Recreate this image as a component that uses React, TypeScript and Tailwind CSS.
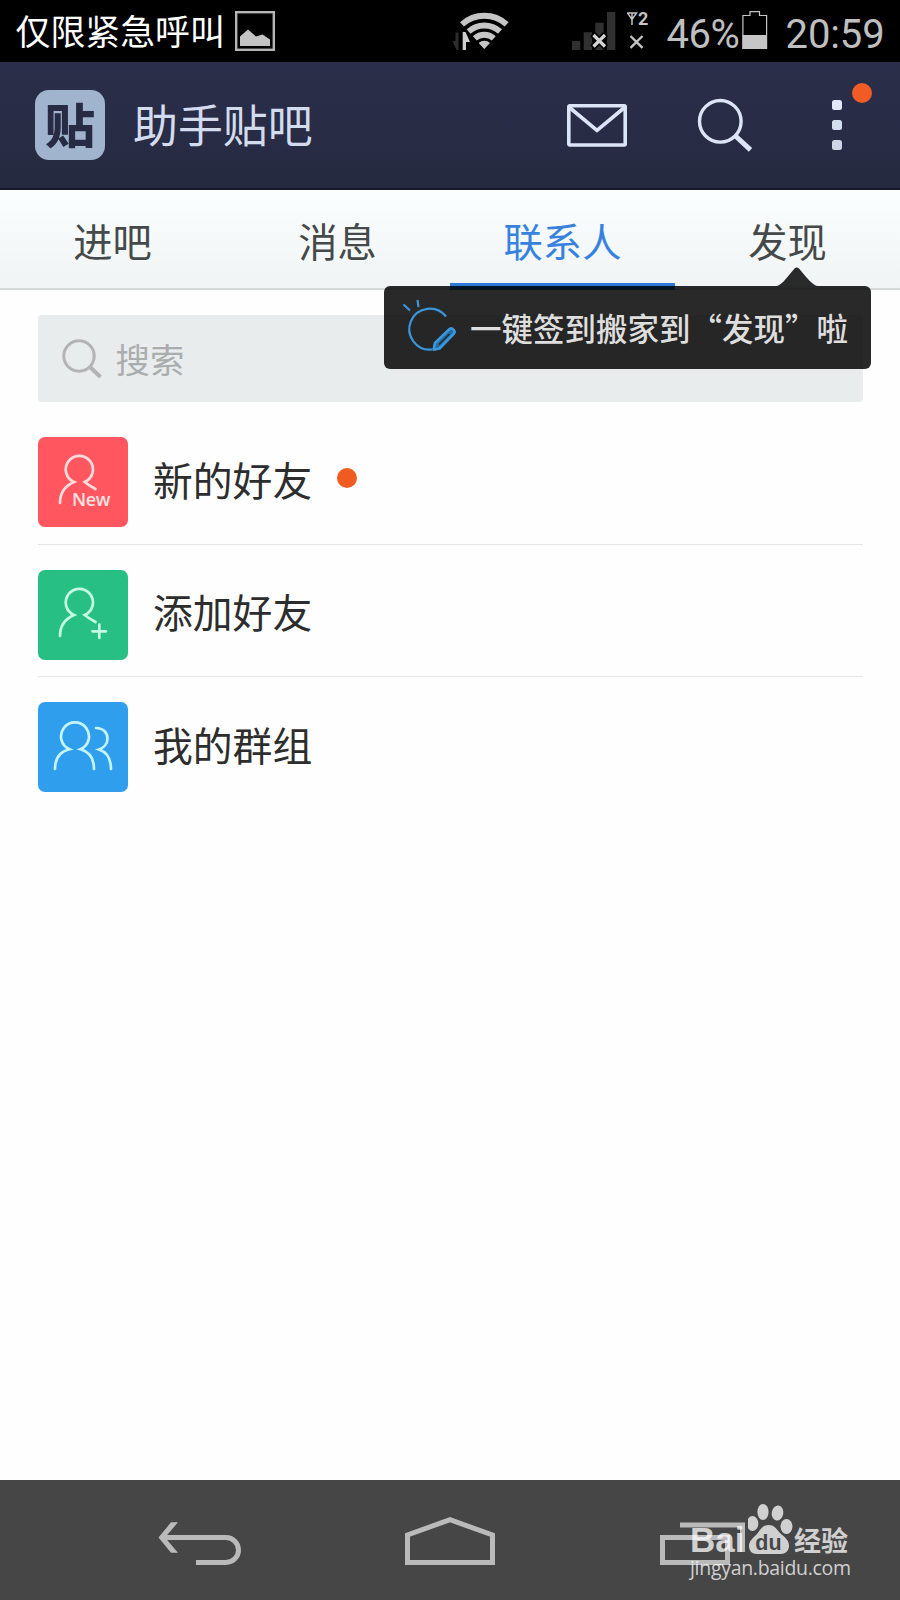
import type { ReactNode } from "react";

const TABS = ["进吧", "消息", "联系人", "发现"];

function PictureIcon() {
  return (
    <svg className="h-10 w-10" viewBox="0 0 40 40" fill="none">
      <rect x="1.2" y="1.2" width="37.6" height="37.6" stroke="#b5b5b5" strokeWidth="2.4" />
      <path d="M5 35V25.5L13 18.5L21 25.5L27.5 23.5L35 28.5V35Z" fill="#c4c4c4" />
    </svg>
  );
}

function WifiIcon() {
  return (
    <svg className="h-[62px] w-[62px]" viewBox="0 0 62 62" fill="none">
      <path d="M2.5 41H5.5V32.5H8.5V50H6.5Z" fill="#2d2d2d" />
      <path d="M12.7 50V32H15.5L20 42H16V50Z" fill="#d0d0d0" />
      <g stroke="#c6c6c6" strokeWidth="5.8">
        <path d="M12 24.3A33.3 33.3 0 0 1 56.6 24.3" />
        <path d="M18.6 31.5A23.5 23.5 0 0 1 50 31.5" />
        <path d="M24.8 38.4A14.2 14.2 0 0 1 43.8 38.4" />
      </g>
      <path d="M34.3 49L28.6 43A8.3 8.3 0 0 1 40 43Z" fill="#c6c6c6" />
    </svg>
  );
}

function SignalIcon() {
  return (
    <svg className="h-[62px] w-11" viewBox="0 0 44 62" fill="none">
      <path
        d="M0 41H8.3V50H0ZM11.7 32.3H20V50H11.7ZM23.3 22.7H31.7V50H23.3ZM35 12H43.3V50H35Z"
        fill="#303030"
      />
      <path d="M20.5 34L34 47.5M34 34L20.5 47.5" stroke="#000" strokeWidth="6.5" />
      <path d="M21.5 35L33 46.5M33 35L21.5 46.5" stroke="#d4d4d4" strokeWidth="3.2" />
    </svg>
  );
}

function SimIcon() {
  return (
    <svg className="h-[62px] w-[22px]" viewBox="0 0 22 62" fill="none">
      <path d="M0.5 13H9.5L5 19.5ZM5 13V25" stroke="#c4c4c4" strokeWidth="1.5" />
      <text x="11" y="25" fill="#c4c4c4" fontSize="18" fontWeight="700" fontFamily="Roboto, sans-serif">
        2
      </text>
      <path d="M3.5 36L15.5 47.8M15.5 36L3.5 47.8" stroke="#c4c4c4" strokeWidth="2.4" />
    </svg>
  );
}

function BatteryIcon() {
  return (
    <svg className="h-[62px] w-[26px]" viewBox="0 0 26 62" fill="none">
      <path d="M0.9 48.4V15.5H8V11.7H17.5V15.5H24.6V48.4Z" stroke="#c4c4c4" strokeWidth="1.2" />
      <path d="M0.5 35H25V49H0.5Z" fill="#c6c6c6" />
    </svg>
  );
}

function StatusBar() {
  return (
    <div className="flex h-[62px] items-center bg-black">
      <span className="mb-[2px] ml-[15.5px] w-[219.5px] text-[34.9px] leading-[58px] whitespace-nowrap text-white">
        仅限紧急呼叫
      </span>
      <PictureIcon />
      <div className="ml-[175px] flex">
        <WifiIcon />
      </div>
      <div className="ml-[59.5px] flex">
        <SignalIcon />
      </div>
      <div className="ml-[11px] flex">
        <SimIcon />
      </div>
      <span className="ml-[18px] w-[75.5px] pt-[7px] font-[Roboto,sans-serif] text-[40px] leading-none tracking-[-0.5px] text-[#bfbfbf]">
        46%
      </span>
      <BatteryIcon />
      <span className="ml-[17.5px] pt-[7px] font-[Roboto,sans-serif] text-[40px] leading-none tracking-[-0.1px] text-[#bfbfbf]">
        20:59
      </span>
    </div>
  );
}

function Header() {
  return (
    <header className="flex h-32 items-start border-b-2 border-[#17192b] bg-linear-to-b from-[#2a2e4a] to-[#262a40]">
      <div className="mt-7 ml-[35px] flex h-[70px] w-[70px] items-center justify-center rounded-[14px] bg-[#a1b4cd] text-[50px] leading-none font-black text-[#272c44]">
        <span className="-mt-1 scale-y-93">贴</span>
      </div>
      <h1 className="ml-[28px] w-[434px] text-[44.9px] leading-[123px] font-normal text-[#d3dbee]">
        助手贴吧
      </h1>
      <svg className="mt-[42px] h-[43px] w-[60px] shrink-0" viewBox="0 0 60 43" fill="none" stroke="#dce5f7">
        <rect x="1.8" y="1.8" width="56.4" height="39.2" rx="1" strokeWidth="3.6" />
        <path d="M2.5 3.5L30 26.5L57.5 3.5" strokeWidth="3.6" />
      </svg>
      <svg className="mt-9 ml-[70px] h-[56px] w-[56px] shrink-0" viewBox="0 0 56 56" fill="none" stroke="#dce5f7">
        <circle cx="23.3" cy="23.3" r="20.8" strokeWidth="3.4" />
        <path d="M38.5 38L53.5 51.8" strokeWidth="5" />
      </svg>
      <div className="relative mt-[38px] ml-[79px] flex flex-col gap-2.5">
        <i className="h-2.5 w-2.5 rounded-[2.5px] bg-[#e0e8fa]" />
        <i className="h-2.5 w-2.5 rounded-[2.5px] bg-[#d5deef]" />
        <i className="h-2.5 w-2.5 rounded-[2.5px] bg-[#cdd5e6]" />
        <b className="absolute -top-[17.5px] left-5 h-5 w-5 rounded-full bg-[#f05b26]" />
      </div>
    </header>
  );
}

function SignTip() {
  return (
    <div className="absolute top-24 left-96 flex h-[83px] w-[487px] items-center rounded-[6px] bg-black/84">
      <svg className="absolute -top-[19px] left-[393px] h-[19px] w-10" viewBox="0 0 40 19">
        <path d="M0 19C5 17 7 14 10 10.5L17.5 1.5Q19.5 -0.5 22 1.5L29.5 10.5C33 14 35 17 40 19Z" fill="#292b2b" />
      </svg>
      <svg className="mt-[2px] h-[83px] w-[86px] shrink-0" viewBox="0 0 86 83" fill="none" stroke="#3a97dc">
        <path d="M19.5 17.5L26 23.5M33.5 13L34.5 20" strokeWidth="2.2" />
        <path d="M62 29.5A20.5 20.5 0 1 0 48 62.5" strokeWidth="2.2" />
        <path
          d="M49.5 62.8L51 56L65.5 42Q67.5 40.5 69.5 42.6Q71.500 44.8 70 46.5L55.500 61.5Z"
          fill="#24699c"
          strokeWidth="2.6"
          strokeLinejoin="round"
        />
        <path d="M55 57.5L65.500 47" stroke="#262626" strokeWidth="1.2" />
      </svg>
      <span className="text-[31.5px] leading-none font-medium whitespace-nowrap text-[#dedede]">
        一键签到搬家到“发现”啦
      </span>
    </div>
  );
}

function Tabs() {
  return (
    <nav className="relative z-10 grid h-[100px] grid-cols-4 border-b-2 border-[#d6d9d9] bg-linear-to-b from-[#fafefe] to-[#f0f4f5]">
      {TABS.map((tab) => (
        <span
          key={tab}
          className={
            tab === "联系人"
              ? "-mb-0.5 h-[100px] border-b-[7px] border-[#2f7ad9] text-center text-[39.3px] leading-[100px] text-[#3682de]"
              : "text-center text-[39.3px] leading-[100px] text-[#454949]"
          }
        >
          {tab}
        </span>
      ))}
      <SignTip />
    </nav>
  );
}

function Row({ color, icon, label, dot }: { color: string; icon: ReactNode; label: string; dot?: boolean }) {
  return (
    <li className="flex h-[132.4px] items-center border-b border-[#e3e4e4] last:border-b-0">
      <svg
        className={`mt-2 h-[90px] w-[90px] rounded-[7px] ${color}`}
        viewBox="0 0 90 90"
        fill="none"
        strokeWidth="2.7"
        strokeLinecap="round"
      >
        {icon}
      </svg>
      <span className="mt-px ml-[25.5px] text-[39.8px] leading-none text-[#2d2d2d]">{label}</span>
      {dot && <span className="ml-[25px] h-5 w-5 rounded-full bg-[#f05b22]" />}
    </li>
  );
}

const PERSON = "M22 66C22 55 28 48.5 36 45A13.6 13.6 0 1 1 46.7 45Q50.5 48.2 57.5 52";

function NavBar() {
  return (
    <footer className="relative flex h-[120px] bg-[#464646]">
      <svg className="h-[120px] w-full" viewBox="0 0 900 120" fill="none" stroke="#bababa" strokeWidth="5">
        <path d="M162 57.5H226A12.5 12.5 0 0 1 226 82.5H196" />
        <path d="M158.5 57.5L171 42.3H178L165 57.5L178 72.7H171Z" fill="#bababa" stroke="none" />
        <path d="M407.5 82.5V55L450 39.7L492.5 55V82.5Z" />
        <path d="M662.5 57.5H727.5V82.5H662.5Z" />
        <path d="M680 45H742.5V72" />
      </svg>
      {/* Baidu watermark */}
      <div className="absolute top-[23px] left-[690px] flex flex-col text-white/75">
        <div className="flex h-[52px] items-end">
          <span className="w-[58px] font-['Liberation_Sans',sans-serif] text-[35px] leading-[30px] font-bold">
            Bai
          </span>
          <svg className="h-[52px] w-[46px]" viewBox="0 0 46 52">
            <g fill="#d0d0d0">
              <ellipse cx="4.5" cy="20.5" rx="5.8" ry="7.5" />
              <ellipse cx="15" cy="9" rx="5.6" ry="8" />
              <ellipse cx="29.5" cy="10" rx="5.8" ry="7.5" transform="rotate(10 29.5 10)" />
              <ellipse cx="38.5" cy="23.5" rx="6" ry="7.5" />
              <path d="M20.5 22C27 22 29 27 33 31C38 35 41 38 41 43C41 48 37 51 33 51H9C4 51 1 48 1 43C1 38 5 35 9 31C13 26 14.5 22 20.5 22Z" />
            </g>
            <text
              x="20.5"
              y="46.5"
              textAnchor="middle"
              fill="#464646"
              fontSize="21.5"
              fontWeight="700"
              fontFamily="Liberation Sans, sans-serif"
            >
              du
            </text>
          </svg>
          <span className="text-[27px] leading-[31px] font-bold">经验</span>
        </div>
        <span className="font-['Open_Sans',sans-serif] text-[19.5px] leading-[26px] tracking-[-0.3px]">
          jingyan.baidu.com
        </span>
      </div>
    </footer>
  );
}

export default function App() {
  return (
    <div
      lang="zh-CN"
      className="flex h-[1600px] w-[900px] flex-col overflow-hidden bg-[#fefefe] font-['Noto_Sans_CJK_SC',sans-serif]"
    >
      <StatusBar />
      <Header />
      <Tabs />
      <main className="flex-1 px-[37.5px] pt-[25px]">
        <div className="flex h-[87px] items-center rounded-[4px] bg-[#e8ecec] pl-[24px] text-[34.4px] text-[#a9adad]">
          <svg className="mr-[14px] h-10 w-10" viewBox="0 0 40 40" fill="none" stroke="#b2b4b4">
            <circle cx="17" cy="17" r="15.2" strokeWidth="3" />
            <path d="M28.5 28.5L38.5 38" strokeWidth="4" />
          </svg>
          <span className="leading-none">搜索</span>
        </div>
        <ul className="pt-[10.5px]">
          <Row
            color="bg-[#ff5660]"
            label="新的好友"
            dot
            icon={
              <>
                <path d={PERSON} stroke="#ffdcdc" />
                <text x="34" y="69" fill="#ffe0e0" fontSize="18" fontWeight="600" letterSpacing="-0.4" fontFamily="Open Sans, sans-serif">
                  New
                </text>
              </>
            }
          />
          <Row
            color="bg-[#27bf83]"
            label="添加好友"
            icon={<path d={PERSON + "M54.5 61.3H68M61.3 54.5V68"} stroke="#c5fbe4" />}
          />
          <Row
            color="bg-[#2f9fed]"
            label="我的群组"
            icon={
              <path
                d="M17 67C17 56 22.5 49.5 31.5 47.3A14 14 0 1 1 42.5 47.3C50.5 49.5 56 56 56 67M58 26C65.5 26 69.5 31 69.5 36.5C69.5 42 65.5 46 61 47.5C68.5 50 73 57 73 67"
                stroke="#c5f3ff"
              />
            }
          />
        </ul>
      </main>
      <NavBar />
    </div>
  );
}
